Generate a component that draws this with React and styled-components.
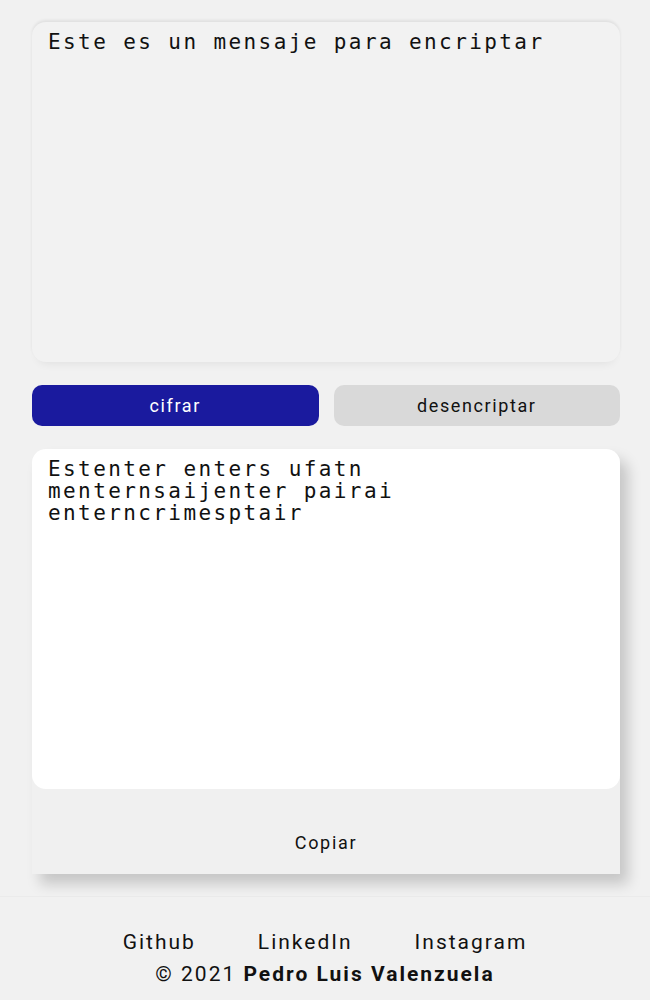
import React from 'react';
import styled, { createGlobalStyle } from 'styled-components';

const GlobalStyle = createGlobalStyle`
    body {
        margin: 0;
        background: #f1f1f1;
        font-family: Roboto, "Liberation Sans", sans-serif;
    }
`

function App() {
    return (
        <>
            <GlobalStyle />
            <Main>
                <InputArea defaultValue="Este es un mensaje para encriptar" />
                <ButtonRow>
                    <ActionButton primary>cifrar</ActionButton>
                    <ActionButton>desencriptar</ActionButton>
                </ButtonRow>
                <OutputCard>
                    <OutputArea defaultValue="Estenter enters ufatn menternsaijenter pairai enterncrimesptair" />
                    <CopyButton>Copiar</CopyButton>
                </OutputCard>
            </Main>
            <Footer>
                <Links>
                    <FooterLink href="#">Github</FooterLink>
                    <FooterLink href="#">LinkedIn</FooterLink>
                    <FooterLink href="#">Instagram</FooterLink>
                </Links>
                <Copy>© 2021 <b>Pedro Luis Valenzuela</b></Copy>
            </Footer>
        </>
    );
}

export default App;

const Main = styled.main`
    padding: 22px 30px 0 32px;
    display: flex;
    flex-direction: column;
`

const TextBase = styled.textarea`
    display: block;
    box-sizing: border-box;
    width: 100%;
    height: 340px;
    border: none;
    outline: none;
    resize: none;
    padding: 9px 16px;
    font-family: "DejaVu Sans Mono", monospace;
    font-size: 21px;
    letter-spacing: 2.4px;
    line-height: 22px;
    color: #111;
`

const InputArea = styled(TextBase)`
    background: #f2f2f2;
    border-radius: 14px;
    box-shadow: 0 -2px 3px rgba(0,0,0,0.07), 0 7px 10px -6px rgba(0,0,0,0.08);
`

const ButtonRow = styled.div`
    display: grid;
    grid-template-columns: 1fr 1fr;
    gap: 15px;
    margin-top: 23px;
`

const ActionButton = styled.button`
    height: 41px;
    border: none;
    border-radius: 10px;
    background: ${p => p.primary ? '#1a1a9e' : '#d9d9d9'};
    color: ${p => p.primary ? '#fff' : '#111'};
    font-family: Roboto, "Liberation Sans", sans-serif;
    font-size: 18px;
    letter-spacing: 1.6px;
    cursor: pointer;
`

const OutputCard = styled.section`
    margin-top: 23px;
    background: #f0f0f0;
    border-radius: 14px 14px 0 0;
    box-shadow: 8px 10px 14px rgba(0,0,0,0.18);
`

const OutputArea = styled(TextBase)`
    background: #fff;
    border-radius: 14px;
`

const CopyButton = styled.button`
    width: 100%;
    height: 85px;
    border: none;
    background: transparent;
    display: flex;
    align-items: flex-end;
    justify-content: center;
    padding: 0 0 21px;
    font-family: Roboto, "Liberation Sans", sans-serif;
    font-size: 18px;
    letter-spacing: 1.7px;
    color: #111;
`

const Footer = styled.footer`
    margin-top: 22px;
    border-top: 1px solid #ebebeb;
    padding: 34px 0 0;
    text-align: center;
    font-family: Roboto, "Liberation Sans", sans-serif;
    font-size: 21px;
    letter-spacing: 2px;
    color: #111;
`

const Links = styled.nav`
    display: flex;
    justify-content: center;
    gap: 62px;
    line-height: 22px;
`

const FooterLink = styled.a`
    color: #111;
    text-decoration: none;
`

const Copy = styled.p`
    margin: 10px 0 0;
    line-height: 22px;
`
